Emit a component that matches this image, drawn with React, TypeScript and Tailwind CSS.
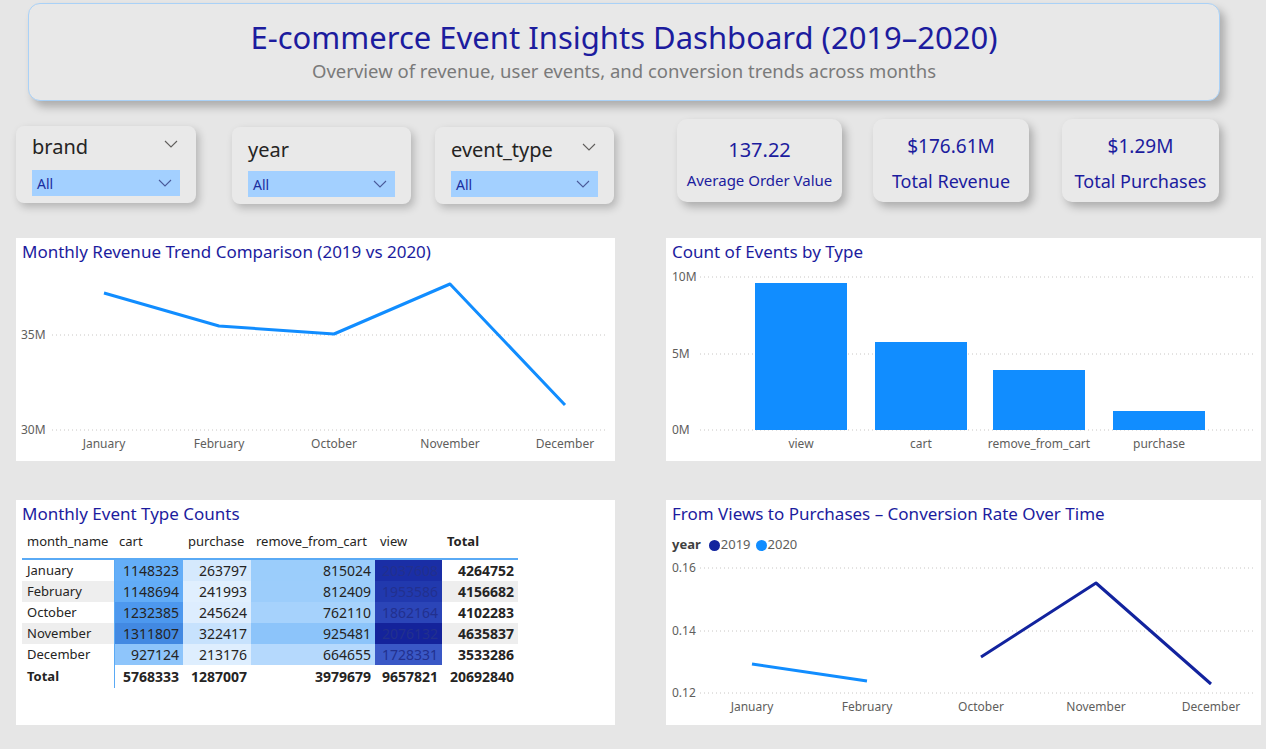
import React from 'react'

const navy = 'text-[#1c1c9e]'

function Chevron({ className = '' }: { className?: string }) {
  return (
    <svg width="14" height="8" viewBox="0 0 14 8" className={className}>
      <polyline points="1,1 7,7 13,1" fill="none" stroke="currentColor" strokeWidth="1.1" />
    </svg>
  )
}

function Slicer({ label, width, topChevron, labelPad }: { label: string; width: string; topChevron: boolean; labelPad: string }) {
  return (
    <div className={`${width} h-[77px] rounded-lg bg-[#e9e9e9] shadow-[3px_4px_8px_rgba(0,0,0,0.22)] px-[16px] flex flex-col`}>
      <div className={`flex items-center justify-between ${labelPad} h-[30px]`}>
        <span className="text-[20px] leading-[24px] text-[#252423]">{label}</span>
        {topChevron && <Chevron className="text-[#605e5c] mr-[2px] mb-[6px]" />}
      </div>
      <div className="mt-auto mb-[7px] h-[26px] bg-[#a3d0ff] flex items-center justify-between pl-[5px] pr-[8px]">
        <span className="text-[14px] text-[#1a2da0]">All</span>
        <Chevron className="text-[#4a5a9a]" />
      </div>
    </div>
  )
}

function Kpi({ value, label, width, valueSize, labelSize, valueTop, labelBottom }: { value: string; label: string; width: string; valueSize: string; labelSize: string; valueTop: string; labelBottom: string }) {
  return (
    <div className={`${width} h-[83px] rounded-[10px] bg-[#e9e9e9] shadow-[4px_5px_8px_rgba(0,0,0,0.25)] flex flex-col items-center ${navy}`}>
      <div className={`${valueTop} ${valueSize} leading-[24px]`}>{value}</div>
      <div className={`mt-auto ${labelBottom} ${labelSize} leading-[24px]`}>{label}</div>
    </div>
  )
}

const axisText = { fill: '#605e5c', fontSize: 12 }

function RevenueChart() {
  const xs = [88, 203, 318, 434, 549]
  const months = ['January', 'February', 'October', 'November', 'December']
  const pts = [
    [88, 55],
    [203, 88],
    [318, 96],
    [434, 46],
    [549, 167],
  ]
  return (
    <svg width="599" height="197" viewBox="0 26 599 197" className="block">
      <line x1="36" x2="590" y1="97" y2="97" stroke="#c8c6c4" strokeDasharray="1 3" />
      <line x1="36" x2="590" y1="192" y2="192" stroke="#c8c6c4" strokeDasharray="1 3" />
      <text x="5" y="101" {...axisText}>35M</text>
      <text x="5" y="196" {...axisText}>30M</text>
      {months.map((m, i) => (
        <text key={m} x={xs[i]} y="210" textAnchor="middle" {...axisText}>{m}</text>
      ))}
      <polyline points={pts.map((p) => p.join(',')).join(' ')} fill="none" stroke="#118dff" strokeWidth="3" strokeLinejoin="round" />
    </svg>
  )
}

function EventsChart() {
  const bars = [
    { name: 'view', x: 89, top: 45 },
    { name: 'cart', x: 209, top: 104 },
    { name: 'remove_from_cart', x: 327, top: 132 },
    { name: 'purchase', x: 447, top: 173 },
  ]
  const grid = [
    { y: 39, l: '10M' },
    { y: 116, l: '5M' },
    { y: 192, l: '0M' },
  ]
  return (
    <svg width="595" height="197" viewBox="0 26 595 197" className="block">
      {grid.map((g) => (
        <g key={g.l}>
          <line x1="34" x2="588" y1={g.y} y2={g.y} stroke="#c8c6c4" strokeDasharray="1 3" />
          <text x="6" y={g.y + 4} {...axisText}>{g.l}</text>
        </g>
      ))}
      {bars.map((b) => (
        <g key={b.name}>
          <rect x={b.x} y={b.top} width="92" height={192 - b.top} fill="#118dff" />
          <text x={b.x + 46} y="210" textAnchor="middle" {...axisText}>{b.name}</text>
        </g>
      ))}
    </svg>
  )
}

function ConversionChart() {
  const xs = [86, 201, 315, 430, 545]
  const months = ['January', 'February', 'October', 'November', 'December']
  const grid = [
    { y: 68, l: '0.16' },
    { y: 131, l: '0.14' },
    { y: 193, l: '0.12' },
  ]
  return (
    <svg width="595" height="169" viewBox="0 56 595 169" className="block">
      {grid.map((g) => (
        <g key={g.l}>
          <line x1="34" x2="588" y1={g.y} y2={g.y} stroke="#c8c6c4" strokeDasharray="1 3" />
          <text x="6" y={g.y + 4} {...axisText}>{g.l}</text>
        </g>
      ))}
      {months.map((m, i) => (
        <text key={m} x={xs[i]} y="211" textAnchor="middle" {...axisText}>{m}</text>
      ))}
      <polyline points="86,164 201,181" fill="none" stroke="#118dff" strokeWidth="3" />
      <polyline points="315,157 430,83 545,184" fill="none" stroke="#12239e" strokeWidth="3" strokeLinejoin="round" />
    </svg>
  )
}

const rows = [
  { m: 'January', v: [1148323, 263797, 815024, 2037608], t: 4264752, c: ['bg-[#64aef8]', 'bg-[#d5e9fd]', 'bg-[#9bcdfb]', 'bg-[#1a2ea6]'], stripe: false },
  { m: 'February', v: [1148694, 241993, 812409, 1953586], t: 4156682, c: ['bg-[#62acf7]', 'bg-[#e0effe]', 'bg-[#9ccdfb]', 'bg-[#2139ae]'], stripe: true },
  { m: 'October', v: [1232385, 245624, 762110, 1862164], t: 4102283, c: ['bg-[#4d98ee]', 'bg-[#ddedfe]', 'bg-[#a6d2fc]', 'bg-[#2b45b8]'], stripe: false },
  { m: 'November', v: [1311807, 322417, 925481, 2076132], t: 4635837, c: ['bg-[#4289e2]', 'bg-[#c7e2fd]', 'bg-[#8cc4fa]', 'bg-[#14239b]'], stripe: true },
  { m: 'December', v: [927124, 213176, 664655, 1728331], t: 3533286, c: ['bg-[#8ec5fb]', 'bg-[#deeefe]', 'bg-[#b5d9fd]', 'bg-[#3a58c6]'], stripe: false },
]

const colW = ['w-[92px]', 'w-[69px]', 'w-[68px]', 'w-[124px]', 'w-[67px]', 'w-[76px]']

function EventTable() {
  return (
    <div className="ml-[6px] w-[496px] text-[14px] text-[#252423]">
      <div className="flex h-[34px] pt-[6px] leading-[18px] text-[13px] border-b-2 border-[#5aaaf5]">
        <div className={`${colW[0]} pl-[5px]`}>month_name</div>
        <div className={`${colW[1]} pl-[5px]`}>cart</div>
        <div className={`${colW[2]} pl-[5px]`}>purchase</div>
        <div className={`${colW[3]} pl-[5px]`}>remove_from_cart</div>
        <div className={`${colW[4]} pl-[5px]`}>view</div>
        <div className={`${colW[5]} pl-[5px] font-bold`}>Total</div>
      </div>
      {rows.map((r) => (
        <div key={r.m} className={`flex h-[21px] leading-[21px] ${r.stripe ? 'bg-[#eeeeee]' : ''}`}>
          <div className={`${colW[0]} pl-[5px] text-[13px]`}>{r.m}</div>
          {r.v.map((n, i) => (
            <div
              key={i}
              className={`${colW[i + 1]} ${r.c[i]} text-right pr-[4px] ${i === 0 ? 'border-l border-[#5aaaf5]' : ''} ${i === 3 ? 'text-[#22308e]' : ''}`}
            >
              {n}
            </div>
          ))}
          <div className={`${colW[5]} text-right pr-[4px] font-bold`}>{r.t}</div>
        </div>
      ))}
      <div className="flex h-[23px] leading-[23px] font-bold">
        <div className={`${colW[0]} pl-[5px] text-[13px]`}>Total</div>
        <div className={`${colW[1]} text-right pr-[4px] border-l border-[#5aaaf5]`}>5768333</div>
        <div className={`${colW[2]} text-right pr-[4px]`}>1287007</div>
        <div className={`${colW[3]} text-right pr-[4px]`}>3979679</div>
        <div className={`${colW[4]} text-right pr-[4px]`}>9657821</div>
        <div className={`${colW[5]} text-right pr-[4px]`}>20692840</div>
      </div>
    </div>
  )
}

function Panel({ title, width, height, children }: { title: string; width: string; height: string; children: React.ReactNode }) {
  return (
    <div className={`${width} ${height} bg-white flex flex-col`}>
      <div className={`pl-[6px] pt-[2px] h-[26px] text-[17px] leading-[24px] ${navy}`}>{title}</div>
      {children}
    </div>
  )
}

export default function App() {
  return (
    <div className="w-[1266px] h-[749px] bg-[#e6e6e6] font-['Segoe_UI','Noto_Sans',sans-serif] overflow-hidden">
      <div className="ml-[28px] mt-[3px] w-[1192px] h-[98px] rounded-xl border border-[#a9d1f7] bg-[#e8e8e8] shadow-[5px_6px_8px_rgba(0,0,0,0.25)] flex flex-col items-center">
        <h1 className="mt-[13px] text-[31px] leading-[40px] text-[#1c1c9e]">E-commerce Event Insights Dashboard (2019–2020)</h1>
        <p className="mt-[2px] text-[18.5px] leading-[24px] text-[#7a7a7a]">Overview of revenue, user events, and conversion trends across months</p>
      </div>

      <div className="flex items-start pl-[16px] mt-[18px] h-[83px]">
        <div className="mt-[7px]">
          <Slicer label="brand" width="w-[180px]" topChevron labelPad="pt-[11px]" />
        </div>
        <div className="mt-[8px] ml-[36px]">
          <Slicer label="year" width="w-[179px]" topChevron={false} labelPad="pt-[15px]" />
        </div>
        <div className="mt-[8px] ml-[24px]">
          <Slicer label="event_type" width="w-[179px]" topChevron labelPad="pt-[15px]" />
        </div>
        <div className="ml-[63px]">
          <Kpi value="137.22" label="Average Order Value" width="w-[165px]" valueSize="text-[20px]" labelSize="text-[15px]" valueTop="mt-[19px]" labelBottom="mb-[10px]" />
        </div>
        <div className="ml-[31px]">
          <Kpi value="$176.61M" label="Total Revenue" width="w-[156px]" valueSize="text-[19px]" labelSize="text-[18px]" valueTop="mt-[15px]" labelBottom="mb-[9px]" />
        </div>
        <div className="ml-[33px]">
          <Kpi value="$1.29M" label="Total Purchases" width="w-[157px]" valueSize="text-[19px]" labelSize="text-[18px]" valueTop="mt-[15px]" labelBottom="mb-[9px]" />
        </div>
      </div>

      <div className="flex pl-[16px] mt-[36px]">
        <Panel title="Monthly Revenue Trend Comparison (2019 vs 2020)" width="w-[599px]" height="h-[223px]">
          <RevenueChart />
        </Panel>
        <div className="ml-[51px]">
          <Panel title="Count of Events by Type" width="w-[595px]" height="h-[223px]">
            <EventsChart />
          </Panel>
        </div>
      </div>

      <div className="flex pl-[16px] mt-[39px]">
        <Panel title="Monthly Event Type Counts" width="w-[599px]" height="h-[225px]">
          <EventTable />
        </Panel>
        <div className="ml-[51px]">
          <Panel title="From Views to Purchases – Conversion Rate Over Time" width="w-[595px]" height="h-[225px]">
            <div className="flex items-center h-[30px] pt-[8px] pl-[6px] text-[13px] text-[#605e5c]">
              <span className="font-bold text-[#404040]">year</span>
              <span className="ml-[8px] w-[11px] h-[11px] rounded-full bg-[#12239e]" />
              <span className="ml-[1px]">2019</span>
              <span className="ml-[5px] w-[11px] h-[11px] rounded-full bg-[#118dff]" />
              <span className="ml-[1px]">2020</span>
            </div>
            <ConversionChart />
          </Panel>
        </div>
      </div>
    </div>
  )
}
